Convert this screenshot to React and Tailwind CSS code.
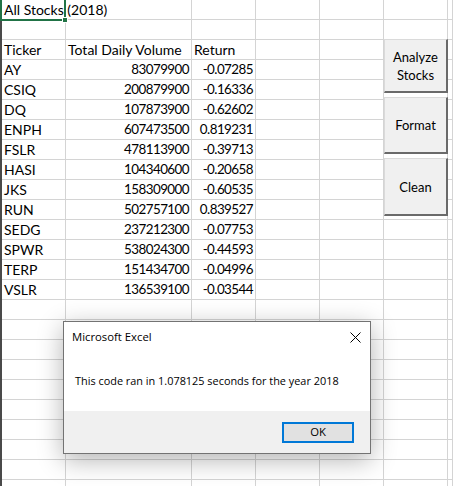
import React from 'react';

const data = [
  ['AY', '83079900', '-0.07285'],
  ['CSIQ', '200879900', '-0.16336'],
  ['DQ', '107873900', '-0.62602'],
  ['ENPH', '607473500', '0.819231'],
  ['FSLR', '478113900', '-0.39713'],
  ['HASI', '104340600', '-0.20658'],
  ['JKS', '158309000', '-0.60535'],
  ['RUN', '502757100', '0.839527'],
  ['SEDG', '237212300', '-0.07753'],
  ['SPWR', '538024300', '-0.44593'],
  ['TERP', '151434700', '-0.04996'],
  ['VSLR', '136539100', '-0.03544'],
];

const TOTAL_ROWS = 25;

function Cell({ text, num, noRight, overflow }) {
  return (
    <div
      className={
        'h-[20px] border-b border-[#d4d4d4] leading-[19px] text-black whitespace-nowrap ' +
        (noRight ? 'border-r-0 ' : 'border-r ') +
        (overflow ? 'overflow-visible ' : 'overflow-hidden ') +
        (num ? 'text-right pr-[2px] text-[13.4px] tracking-[-0.55px]' : 'text-left pl-[2px] text-[14px]')
      }
    >
      {text}
    </div>
  );
}

function buildRows() {
  const rows = [];
  for (let r = 0; r < TOTAL_ROWS; r++) {
    let cells;
    if (r === 0) {
      cells = [{ text: 'All Stocks (2018)', noRight: true, overflow: true }, {}, {}, {}, {}, {}, {}];
    } else if (r === 2) {
      cells = [{ text: 'Ticker' }, { text: 'Total Daily Volume' }, { text: 'Return' }, {}, {}, {}, {}];
    } else if (r >= 3 && r < 3 + data.length) {
      const d = data[r - 3];
      cells = [{ text: d[0] }, { text: d[1], num: true }, { text: d[2], num: true }, {}, {}, {}, {}];
    } else {
      cells = [{}, {}, {}, {}, {}, {}, {}];
    }
    rows.push(cells);
  }
  return rows;
}

function SheetButton({ top, children }) {
  return (
    <div
      className={
        'absolute left-[384px] w-[64px] flex items-center justify-center text-center bg-[#f0f0f0] border-t border-l border-t-[#dadada] border-l-[#dadada] border-r-2 border-b-2 border-r-[#6a6a6a] border-b-[#6a6a6a] text-[13px] leading-[18px] text-black ' +
        top
      }
      style={{ fontFamily: 'Lato, sans-serif' }}
    >
      {children}
    </div>
  );
}

export default function App() {
  const rows = buildRows();
  return (
    <div className="relative w-[453px] h-[486px] overflow-hidden bg-white" style={{ fontFamily: 'Lato, sans-serif' }}>
      <div className="grid grid-cols-[64px_126px_64px_64px_64px_64px_1fr] border-l-2 border-[#4a4a4a]">
        {rows.map((cells, r) =>
          cells.map((c, i) => <Cell key={r + '-' + i} {...c} />)
        )}
      </div>

      {/* selection of A1 */}
      <div className="absolute left-0 top-[-2px] w-[66px] h-[23px] border-2 border-[#217346] pointer-events-none" />
      <div className="absolute left-[62px] top-[17px] w-[6px] h-[6px] bg-[#217346] border border-white" />

      <SheetButton top="top-[39px] h-[54px]">
        <span>Analyze<br />Stocks</span>
      </SheetButton>
      <SheetButton top="top-[97px] h-[57px]">Format</SheetButton>
      <SheetButton top="top-[158px] h-[58px]">Clean</SheetButton>

      {/* message box */}
      <div
        className="absolute left-[63px] top-[321px] w-[308px] h-[133px] flex flex-col bg-white border border-[#737373] shadow-[0_6px_24px_rgba(0,0,0,0.3)]"
        style={{ fontFamily: '"Open Sans", sans-serif' }}
      >
        <div className="h-[30px] flex items-center justify-between pl-[8px] pr-[9px]">
          <span className="text-[11.3px] text-black">Microsoft Excel</span>
          <svg width="11" height="11" viewBox="0 0 11 11" className="block">
            <path d="M0.5 0.5 L10.5 10.5 M10.5 0.5 L0.5 10.5" stroke="#000" strokeWidth="1" fill="none" />
          </svg>
        </div>
        <div className="flex-1 flex items-center pl-[11px] text-[10.9px] text-black">
          This code ran in 1.078125 seconds for the year 2018
        </div>
        <div className="h-[42px] flex items-center justify-end pr-[16px] bg-[#f0f0f0]">
          <div className="w-[72px] h-[21px] flex items-center justify-center border-2 border-[#0078d7] bg-[#e1e1e1] text-[11.3px] text-black">
            OK
          </div>
        </div>
      </div>
    </div>
  );
}
